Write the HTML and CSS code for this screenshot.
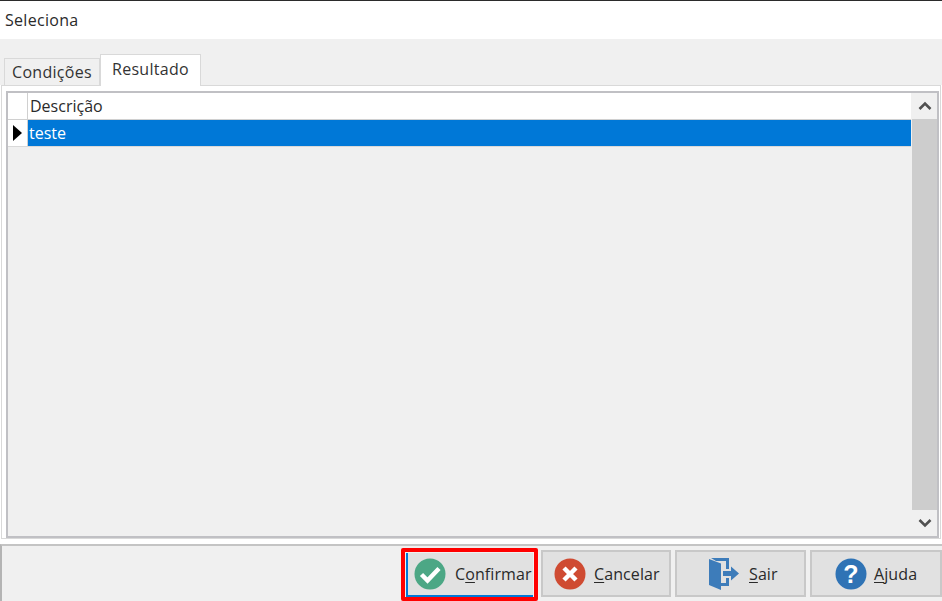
FILE: index.html
```html
<!DOCTYPE html>
<html lang="pt">
<head>
<meta charset="utf-8">
<title>Seleciona</title>
<link rel="stylesheet" href="styles.css">
</head>
<body>
<div class="window">
  <header class="titlebar">Seleciona</header>
  <div class="tabstrip">
    <div class="tab">Condições</div>
    <div class="tab tab-active">Resultado</div>
  </div>
  <main class="pane">
    <div class="grid">
      <div class="grid-body">
        <div class="row row-head">
          <div class="indicator"></div>
          <div class="cell">Descrição</div>
        </div>
        <div class="row row-data">
          <div class="indicator"><span class="arrow"></span></div>
          <div class="cell cell-selected">teste</div>
        </div>
      </div>
      <div class="scrollbar">
        <div class="scroll-btn">
          <svg width="14" height="10" viewBox="0 0 14 10"><path d="M1.5 8 L7 2.5 L12.500 8" fill="none" stroke="#505050" stroke-width="2.6"/></svg>
        </div>
        <div class="scroll-thumb"></div>
        <div class="scroll-btn">
          <svg width="14" height="10" viewBox="0 0 14 10"><path d="M1.500 2 L7 7.500 L12.500 2" fill="none" stroke="#505050" stroke-width="2.600"/></svg>
        </div>
      </div>
    </div>
  </main>
  <footer class="actions">
    <div class="highlight">
      <button class="btn btn-focus" type="button">
        <svg width="32" height="32" viewBox="0 0 32 32"><circle cx="16" cy="16" r="15.500" fill="#4ca785"/><path d="M7.500 16.500 L13.500 22.500 L25 10.500" fill="none" stroke="#fff" stroke-width="4.500"/></svg>
        <span class="label">C<u>o</u>nfirmar</span>
      </button>
    </div>
    <button class="btn btn-cancel" type="button">
      <svg width="32" height="32" viewBox="0 0 32 32"><circle cx="16" cy="16" r="15.500" fill="#cf4b32"/><path d="M10 10 L22 22 M22 10 L10 22" stroke="#fff" stroke-width="4.500"/></svg>
      <span class="label"><u>C</u>ancelar</span>
    </button>
    <button class="btn btn-exit" type="button">
      <svg width="32" height="34" viewBox="0 0 32 34"><path d="M1 2 L13 6.500 V33 L1 28 Z" fill="#3d7cba"/><path d="M3 1 H21 V12 H18 V4 H8 Z M18 21 H21 V29 H13 V26 H18 Z" fill="#3d7cba"/><path d="M15 14 H23 V9.500 L31 16.500 L23 23.500 V19 H15 Z" fill="#3d7cba"/></svg>
      <span class="label"><u>S</u>air</span>
    </button>
    <button class="btn btn-help" type="button">
      <svg width="32" height="32" viewBox="0 0 32 32"><circle cx="16" cy="16" r="15.500" fill="#2f73b5"/><text x="16" y="25" text-anchor="middle" class="help-mark">?</text></svg>
      <span class="label"><u>A</u>juda</span>
    </button>
  </footer>
</div>
</body>
</html>
```

FILE: styles.css
```css
* { box-sizing: border-box; }
html, body { margin: 0; padding: 0; }
body {
  width: 942px;
  height: 601px;
  overflow: hidden;
  background: #fff;
  font-family: "Open Sans", "Noto Sans", sans-serif;
  font-size: 16px;
  color: #2a2a2a;
}
.window {
  display: flex;
  flex-direction: column;
  height: 601px;
  border-top: 1px solid #2b2b2b;
}
.titlebar {
  height: 38px;
  flex: none;
  padding: 8px 0 0 5px;
  line-height: 22px;
  letter-spacing: 0.3px;
  background: #fff;
}
.tabstrip {
  flex: none;
  height: 46px;
  background: #f0f0f0;
  display: flex;
  align-items: flex-end;
  padding-left: 4px;
  position: relative;
  z-index: 1;
}
.tab {
  width: 96px;
  height: 27px;
  border: 1px solid #d9d9d9;
  border-bottom: 0;
  background: #f0f0f0;
  text-align: center;
  line-height: 27px;
  letter-spacing: 0.3px;
  color: #333;
}
.tab-active {
  width: 101px;
  height: 32px;
  background: #fff;
  line-height: 29px;
  margin-bottom: -1px;
}
.pane {
  flex: none;
  height: 454px;
  margin: 0 1px;
  background: #fff;
  border: 1px solid #d9d9d9;
  padding: 5px 1px 0 4px;
}
.grid {
  height: 447px;
  border: 2px solid #c0c0c4;
  background: #f0f0f0;
  display: flex;
}
.grid-body { flex: 1; min-width: 0; }
.row { display: flex; }
.row-head { height: 27px; background: #fff; border-bottom: 1px solid #d0d0d0; }
.row-head .cell { line-height: 27px; }
.row-data { height: 27px; border-bottom: 1px solid #d9d9d9; }
.indicator {
  width: 20px;
  flex: none;
  background: #fff;
  border-right: 1px solid #d0d0d0;
  display: flex;
  align-items: center;
  padding-left: 5px;
}
.arrow {
  width: 0;
  height: 0;
  border-left: 9px solid #000;
  border-top: 8px solid transparent;
  border-bottom: 8px solid transparent;
}
.cell { flex: 1; padding-left: 2px; line-height: 27px; }
.cell-selected {
  background: #0078d7;
  color: #fff;
  padding-left: 1px;
  line-height: 26px;
}
.scrollbar {
  width: 25px;
  flex: none;
  margin-left: 1px;
  background: #f0f0f0;
  display: flex;
  flex-direction: column;
}
.scroll-btn {
  height: 26px;
  flex: none;
  display: flex;
  align-items: center;
  justify-content: center;
}
.scroll-thumb { flex: 1; background: #cdcdcd; }
.actions {
  flex: none;
  height: 57px;
  margin-top: 5px;
  background: #f0f0f0;
  border-top: 2px solid #c4c4c4;
  border-left: 2px solid #b4b4b4;
  display: flex;
  align-items: flex-start;
  justify-content: flex-end;
  gap: 4px;
  padding-top: 4px;
}
.highlight {
  width: 137px;
  height: 53px;
  margin-top: -2px;
  margin-right: -1px;
  border: 4px solid #f00;
  border-radius: 2px;
  padding: 1px 1px 0;
  background: #f0f0f0;
  flex: none;
}
.btn {
  height: 47px;
  padding: 0;
  margin: 0;
  border: 2px solid #c8c8c8;
  background: #e1e1e1;
  font: inherit;
  color: #2a2a2a;
  display: flex;
  align-items: center;
  flex: none;
  letter-spacing: 0.1px;
}
.btn u { text-underline-offset: 2px; }
.btn-focus {
  width: 127px;
  height: 44px;
  border: 0;
  border-left: 2px solid #0078d7;
  border-bottom: 2px solid #0078d7;
  padding-left: 6px;
  gap: 9px;
}
.btn-cancel { width: 130px; padding-left: 11px; gap: 8px; }
.btn-exit { width: 131px; padding-left: 31px; gap: 9px; }
.btn-help { width: 132px; padding-left: 23px; gap: 7px; }
.help-mark {
  font-family: "Liberation Sans", sans-serif;
  font-weight: 700;
  font-size: 25px;
  fill: #fff;
}
```
